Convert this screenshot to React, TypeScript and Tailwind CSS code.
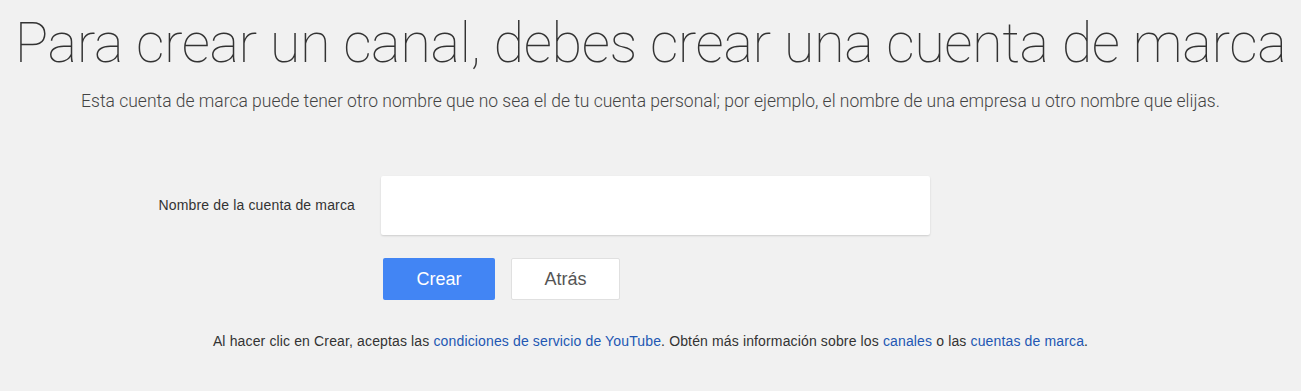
export default function App() {
  return (
    <div className="min-h-[391px] w-full bg-[#f1f1f1] text-[#333]">
      <div className="flex flex-col items-center pt-[11px]">
        <h1 className="whitespace-nowrap font-['Roboto',sans-serif] text-[56px] font-thin leading-[64px] tracking-[-0.45px] text-[#333]">
          Para crear un canal, debes crear una cuenta de marca
        </h1>
        <p className="mt-[16px] whitespace-nowrap font-['Roboto',sans-serif] text-[17.5px] font-light leading-[20px] text-[#444]">
          Esta cuenta de marca puede tener otro nombre que no sea el de tu cuenta personal; por ejemplo, el nombre de una empresa u otro nombre que elijas.
        </p>
      </div>

      <div className="ml-[133px] mt-[65px] grid grid-cols-[222px_549px] items-center gap-x-[26px] gap-y-[23px] font-['Liberation_Sans',Arial,sans-serif]">
        <label className="text-right text-[14px] tracking-[0.15px] text-[#333]">Nombre de la cuenta de marca</label>
        <input
          type="text"
          className="h-[59px] rounded-[2px] bg-white px-3 text-[16px] shadow-[0_1px_2px_rgba(0,0,0,0.15)] outline-none"
        />
        <div />
        <div className="flex gap-[16px] pl-[2px]">
          <button className="h-[42px] w-[112px] rounded-[2px] bg-[#4285f4] text-[18px] text-white">
            Crear
          </button>
          <button className="h-[42px] w-[109px] rounded-[2px] border border-[#e0e0e0] bg-white text-[18px] text-[#555]">
            Atrás
          </button>
        </div>
      </div>

      <p className="mt-[33px] text-center font-['Liberation_Sans',Arial,sans-serif] text-[14px] leading-[16px] tracking-[0.14px] text-[#333]">
        Al hacer clic en Crear, aceptas las{" "}
        <a href="#" className="text-[#2257b3]">condiciones de servicio de YouTube</a>. Obtén más información sobre los{" "}
        <a href="#" className="text-[#2257b3]">canales</a> o las{" "}
        <a href="#" className="text-[#2257b3]">cuentas de marca</a>.
      </p>
    </div>
  );
}
